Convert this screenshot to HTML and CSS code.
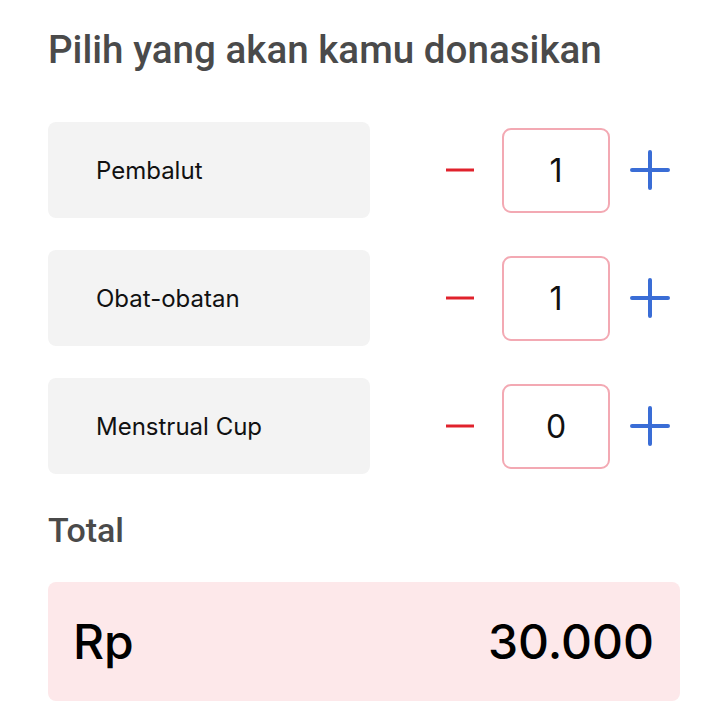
FILE: index.html
```html
<!DOCTYPE html>
<html lang="id">
<head>
<meta charset="utf-8">
<link rel="stylesheet" href="styles.css">
</head>
<body>
<div class="page">
  <h1 class="title">Pilih yang akan kamu donasikan</h1>
  <div class="list">
    <div class="row">
      <div class="item">Pembalut</div>
      <button class="btn minus" aria-label="kurangi"><svg width="30" height="6" viewBox="0 0 30 6"><line x1="1" y1="3" x2="29" y2="3" stroke="#e0222c" stroke-width="3"/></svg></button>
      <div class="qty">1</div>
      <button class="btn plus" aria-label="tambah"><svg width="42" height="42" viewBox="0 0 42 42"><path d="M3 21H39M21 3V39" stroke="#3a6dd6" stroke-width="4" stroke-linecap="round" fill="none"/></svg></button>
    </div>
    <div class="row">
      <div class="item">Obat-obatan</div>
      <button class="btn minus" aria-label="kurangi"><svg width="30" height="6" viewBox="0 0 30 6"><line x1="1" y1="3" x2="29" y2="3" stroke="#e0222c" stroke-width="3"/></svg></button>
      <div class="qty">1</div>
      <button class="btn plus" aria-label="tambah"><svg width="42" height="42" viewBox="0 0 42 42"><path d="M3 21H39M21 3V39" stroke="#3a6dd6" stroke-width="4" stroke-linecap="round" fill="none"/></svg></button>
    </div>
    <div class="row">
      <div class="item">Menstrual Cup</div>
      <button class="btn minus" aria-label="kurangi"><svg width="30" height="6" viewBox="0 0 30 6"><line x1="1" y1="3" x2="29" y2="3" stroke="#e0222c" stroke-width="3"/></svg></button>
      <div class="qty">0</div>
      <button class="btn plus" aria-label="tambah"><svg width="42" height="42" viewBox="0 0 42 42"><path d="M3 21H39M21 3V39" stroke="#3a6dd6" stroke-width="4" stroke-linecap="round" fill="none"/></svg></button>
    </div>
  </div>
  <h2 class="total-label">Total</h2>
  <div class="total">
    <span>Rp</span>
    <span>30.000</span>
  </div>
</div>
</body>
</html>
```

FILE: styles.css
```css
* { box-sizing: border-box; }
html, body { margin: 0; padding: 0; background: #ffffff; }
.page {
  padding: 28px 40px 0 48px;
  font-family: Inter, "Noto Sans", sans-serif;
}
.title {
  margin: 0;
  font-family: Roboto, sans-serif;
  font-weight: 500;
  font-size: 38.6px;
  line-height: 44px;
  color: #4a4a4a;
}
.list {
  margin-top: 50px;
  display: flex;
  flex-direction: column;
  gap: 32px;
}
.row {
  display: flex;
  align-items: center;
  height: 96px;
}
.item {
  width: 322px;
  height: 96px;
  background: #f3f3f3;
  border-radius: 8px;
  display: flex;
  align-items: center;
  padding-left: 48px;
  font-size: 24px;
  color: #111;
}
.btn {
  border: 0;
  background: none;
  padding: 0;
  display: flex;
  align-items: center;
  justify-content: center;
}
.minus { margin-left: 75px; width: 30px; }
.qty {
  margin-left: 27px;
  width: 108px;
  height: 85px;
  border: 2px solid #f3a9b3;
  border-radius: 9px;
  display: flex;
  align-items: center;
  justify-content: center;
  font-size: 32px;
  color: #111;
}
.plus { margin-left: 19px; width: 42px; height: 42px; }
.total-label {
  margin: 36px 0 0;
  font-family: Roboto, sans-serif;
  font-weight: 500;
  font-size: 34px;
  line-height: 40px;
  color: #4a4a4a;
}
.total {
  margin-top: 32px;
  height: 119px;
  background: #fde8ea;
  border-radius: 8px;
  display: flex;
  align-items: center;
  justify-content: space-between;
  padding: 0 26px 0 25px;
  font-size: 48px;
  font-weight: 500;
  color: #000;
}
```
